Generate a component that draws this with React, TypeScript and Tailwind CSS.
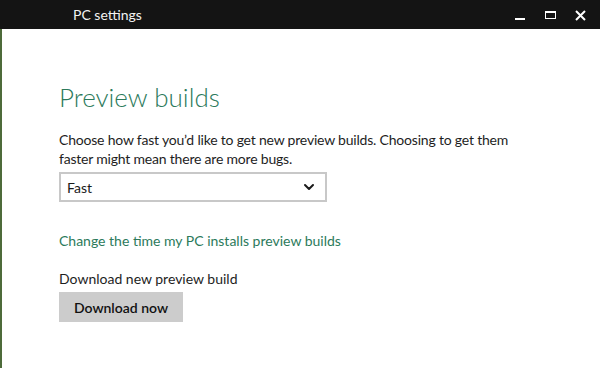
import { ChevronDown } from 'lucide-react';

export default function App() {
  return (
    <div className="w-[600px] h-[368px] bg-white flex flex-col overflow-hidden" style={{ fontFamily: 'Lato, "Open Sans", sans-serif' }}>
      <div className="h-[29px] bg-[#141414] flex items-center shrink-0">
        <span className="ml-[73px] text-[14px] text-[#f2f2f2]">PC settings</span>
        <div className="ml-auto flex items-center h-full">
          <div className="w-[30px] h-full flex items-center justify-center">
            <div className="w-[10px] h-[2px] bg-white mt-[8px]" />
          </div>
          <div className="w-[30px] h-full flex items-center justify-center">
            <div className="w-[11px] h-[8px] border border-white border-t-2 mt-[1px]" />
          </div>
          <div className="w-[30px] h-full flex items-center justify-center mr-[5px]">
            <svg width="11" height="11" viewBox="0 0 11 11" className="mt-[1px]">
              <path d="M1 1 L10 10 M10 1 L1 10" stroke="white" strokeWidth="2" />
            </svg>
          </div>
        </div>
      </div>
      <div className="flex-1 border-l-2 border-[#4d6b3a] pl-[57px] pt-[52px]">
        <h1 className="text-[26px] font-light text-[#2c7a5b] leading-[32px]">Preview builds</h1>
        <p className="mt-[17px] text-[14px] leading-[19px] tracking-[-0.2px] text-[#1e1e1e] w-[470px]">
          Choose how fast you’d like to get new preview builds. Choosing to get them faster might mean there are more bugs.
        </p>
        <div className="mt-[4px] w-[268px] h-[30px] border-2 border-[#c8c8c8] flex items-center px-[6px] text-[14px] text-[#1a1a1a]">
          <span>Fast</span>
          <ChevronDown className="ml-auto mr-[2px] w-[16px] h-[16px]" strokeWidth={3} />
        </div>
        <div className="mt-[28px] text-[14px] text-[#2c7a5b]">Change the time my PC installs preview builds</div>
        <div className="mt-[17px] text-[14px] text-[#1e1e1e]">Download new preview build</div>
        <button className="mt-[3px] w-[124px] h-[30px] bg-[#cccccc] text-[14px] font-semibold text-[#111]">Download now</button>
      </div>
    </div>
  );
}
